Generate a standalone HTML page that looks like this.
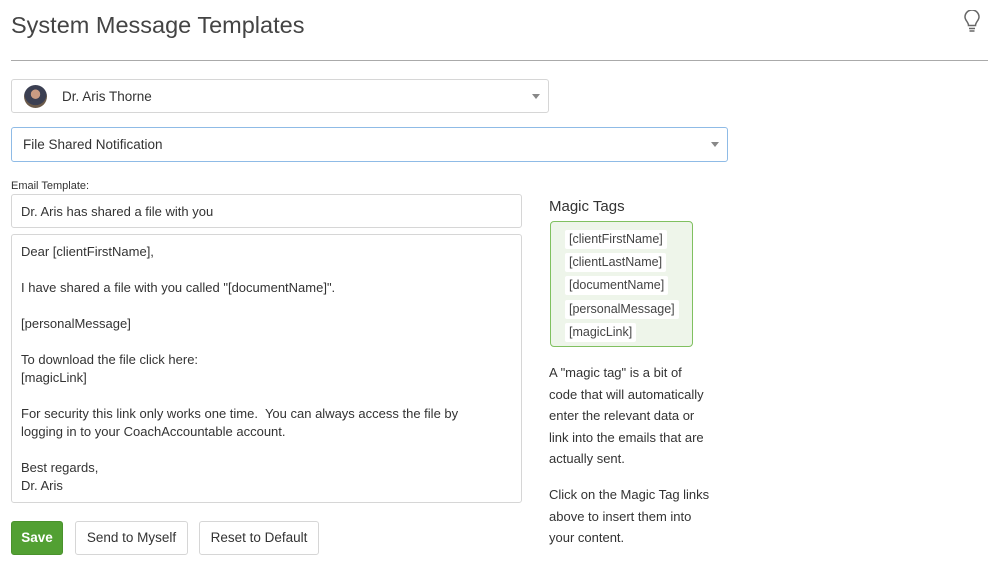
<!DOCTYPE html>
<html><head><style>
*{box-sizing:border-box;margin:0;padding:0}
body{width:1000px;height:571px;background:#fff;font-family:"Liberation Sans",sans-serif;color:#333;position:relative;overflow:hidden}
.a{position:absolute}
.box{position:absolute;border:1px solid #d6d6d6;border-radius:3px;background:#fff;font-size:13.5px;color:#333}
.caret{position:absolute;right:8px;top:14px;width:0;height:0;border-left:4px solid transparent;border-right:4px solid transparent;border-top:5px solid #888}
.tag{position:absolute;left:14px;background:#fff;font-size:12.5px;color:#444;padding:2px 4px;border-radius:2px;line-height:15px}
.btn{position:absolute;top:521px;height:34px;border:1px solid #d6d6d6;border-radius:3px;font-size:13.5px;line-height:32px;text-align:center;color:#333;background:#fff}
.ta div{height:18px;line-height:18px}
</style></head><body>
<div class="a" style="left:11px;top:12px;font-size:23.5px;color:#444">System Message Templates</div>
<svg class="a" style="left:962px;top:10px" width="20" height="24" viewBox="0 0 20 24"><path d="M6.5 15.5 C6.5 12 3 10.5 3 7 A7 7 0 0 1 17 7 C17 10.5 13.5 12 13.5 15.5 Z" fill="none" stroke="#666" stroke-width="1.5"/><path d="M7 18.5h6M7.5 21h5" stroke="#666" stroke-width="1.5"/></svg>
<div class="a" style="left:11px;top:60px;width:977px;height:1px;background:#aaa"></div>

<div class="box" style="left:11px;top:79px;width:538px;height:34px">
<div class="a" style="left:12px;top:5px;width:23px;height:23px;border-radius:50%;background:radial-gradient(circle at 50% 40%,#c99b83 0 25%,#3b3f52 27% 60%,#6b5a4a 62%)"></div>
<div class="a" style="left:50px;top:9px">Dr. Aris Thorne</div><div class="caret"></div></div>

<div class="box" style="left:11px;top:127px;width:717px;height:35px;border-color:#8fbbe6">
<div class="a" style="left:11px;top:9px">File Shared Notification</div><div class="caret"></div></div>

<div class="a" style="left:11px;top:180px;font-size:11px;color:#333">Email Template:</div>
<div class="box" style="left:11px;top:194px;width:511px;height:34px"><div class="a" style="left:9px;top:9px;font-size:13px">Dr. Aris has shared a file with you</div></div>
<div class="box ta" style="left:11px;top:234px;width:511px;height:269px;padding:8px 9px;font-size:13px">
<div>Dear [clientFirstName],</div><div></div><div>I have shared a file with you called "[documentName]".</div><div></div><div>[personalMessage]</div><div></div><div>To download the file click here:</div><div>[magicLink]</div><div></div><div>For security this link only works one time.&nbsp; You can always access the file by</div><div>logging in to your CoachAccountable account.</div><div></div><div>Best regards,</div><div>Dr. Aris</div>
</div>

<div class="btn" style="left:11px;width:52px;background:#52a033;border-color:#4a922d;color:#fff;font-weight:bold">Save</div>
<div class="btn" style="left:75px;width:113px">Send to Myself</div>
<div class="btn" style="left:199px;width:120px">Reset to Default</div>

<div class="a" style="left:549px;top:198px;font-size:15px;color:#333">Magic Tags</div>
<div class="a" style="left:550px;top:221px;width:143px;height:126px;background:#eef5ea;border:1px solid #80c060;border-radius:4px">
<div class="tag" style="top:8px">[clientFirstName]</div>
<div class="tag" style="top:31px">[clientLastName]</div>
<div class="tag" style="top:54px">[documentName]</div>
<div class="tag" style="top:78px">[personalMessage]</div>
<div class="tag" style="top:101px">[magicLink]</div>
</div>
<div class="a" style="left:549px;top:362px;width:200px;font-size:13px;line-height:21.6px;white-space:nowrap">A "magic tag" is a bit of<br>code that will automatically<br>enter the relevant data or<br>link into the emails that are<br>actually sent.</div>
<div class="a" style="left:549px;top:484px;width:200px;font-size:13px;line-height:21.6px;white-space:nowrap">Click on the Magic Tag links<br>above to insert them into<br>your content.</div>
</body></html>
